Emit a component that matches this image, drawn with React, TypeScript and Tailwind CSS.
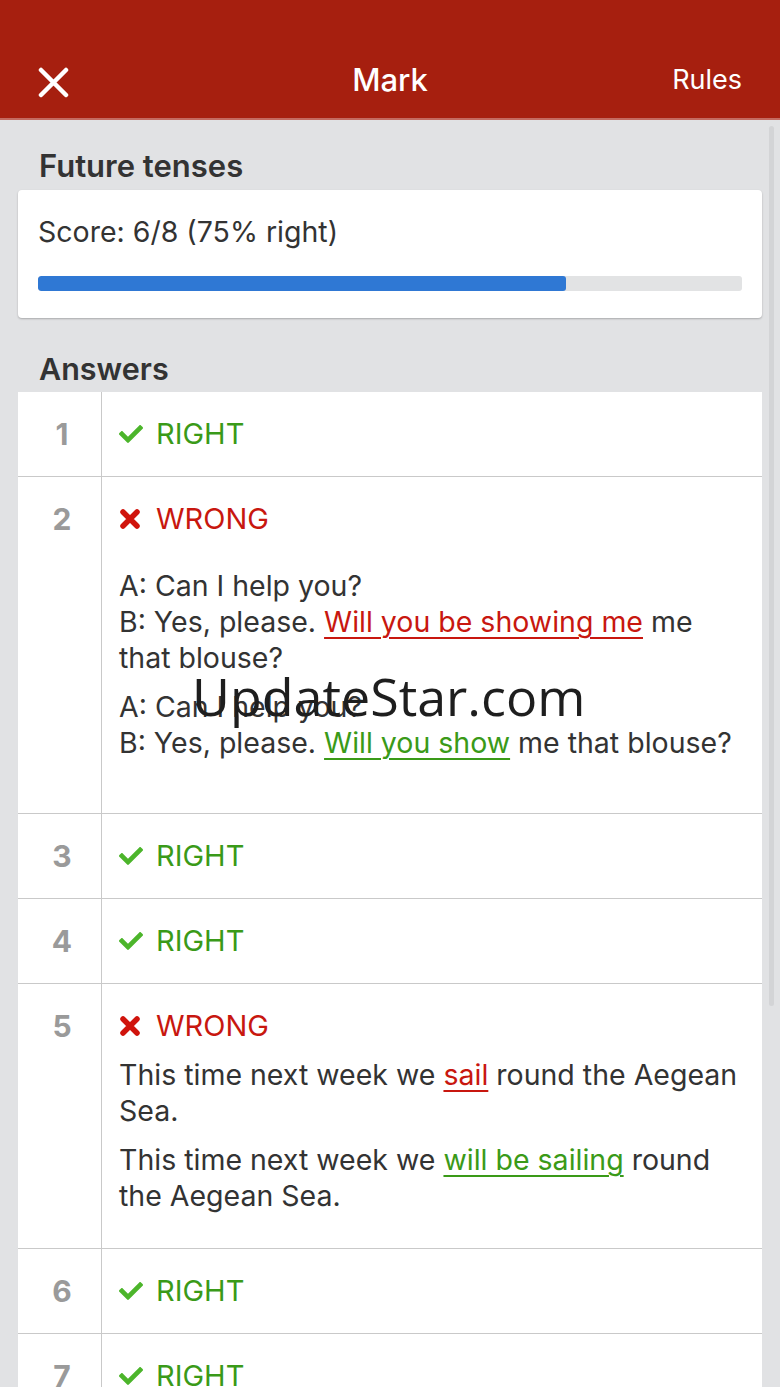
import React from "react";
import { FaCheck } from "react-icons/fa";

const font = { fontFamily: "Inter, 'Liberation Sans', sans-serif" };

function XMark() {
  return (
    <svg width="22" height="22" viewBox="0 0 22 22" className="mr-[15px]">
      <path d="M4 4 L18 18 M18 4 L4 18" stroke="#d0140c" strokeWidth="5.5" strokeLinecap="round" />
    </svg>
  );
}

function Right() {
  return (
    <div className="flex items-center h-[36px]">
      <FaCheck className="text-[#4cb52b] w-[24px] h-[24px] mr-[13px]" />
      <span className="text-[29px] text-[#3a9a18] leading-[36px]">RIGHT</span>
    </div>
  );
}

function Wrong() {
  return (
    <div className="flex items-center h-[36px]">
      <XMark />
      <span className="text-[29px] text-[#c8170f] leading-[36px]">WRONG</span>
    </div>
  );
}

function Row({ n, children, last }: { n: number; children: React.ReactNode; last?: boolean }) {
  return (
    <div className={"flex " + (last ? "" : "border-b border-[#c9c9c9]")}>
      <div className="w-[84px] shrink-0 border-r border-[#c9c9c9] flex justify-center pl-[5px] pt-[24px]">
        <span className="text-[30px] font-bold text-[#9a9a9a] leading-[36px]">{n}</span>
      </div>
      <div className="flex-1 pl-[17px] pr-[8px] pt-[24px] pb-[24px]">{children}</div>
    </div>
  );
}

const Bad = ({ children }: { children: React.ReactNode }) => (
  <span className="text-[#c8170f] underline decoration-[2px] underline-offset-[5px]">{children}</span>
);
const Good = ({ children }: { children: React.ReactNode }) => (
  <span className="text-[#3a9a18] underline decoration-[2px] underline-offset-[5px]">{children}</span>
);

export default function App() {
  return (
    <div className="w-[780px] h-[1387px] overflow-hidden bg-[#e1e2e4] relative" style={font}>
      <div className="h-[120px] bg-[#a61f0f] border-b-[2px] border-[#c46a60] flex items-end pb-[20px] px-[38px]">
        <div className="w-[110px] flex">
          <svg width="31" height="31" viewBox="0 0 31 31" className="mt-[2px]">
            <path d="M3 3 L28 28 M28 3 L3 28" stroke="white" strokeWidth="4.5" strokeLinecap="round" />
          </svg>
        </div>
        <div className="flex-1 text-center text-white text-[31px] font-medium leading-[36px]">Mark</div>
        <div className="w-[110px] text-right text-white text-[27px] leading-[36px]">Rules</div>
      </div>

      <div className="absolute left-[769px] top-[126px] w-[5px] h-[880px] rounded-full bg-[#d3d4d6]" />

      <div className="px-[18px]">
        <div className="pl-[21px] pt-[28px] pb-[6px] text-[31px] font-semibold text-[#333] leading-[36px]">Future tenses</div>
        <div className="bg-white rounded-[4px] shadow-[0_1px_2px_rgba(0,0,0,0.25)] px-[20px] pt-[24px] pb-[27px]">
          <div className="text-[28.5px] text-[#333] leading-[36px]">Score: 6/8 (75% right)</div>
          <div className="mt-[26px] h-[15px] bg-[#e2e3e4] rounded-[3px] overflow-hidden">
            <div className="h-full bg-[#2f78d4] rounded-[3px]" style={{ width: "75%" }} />
          </div>
        </div>

        <div className="pl-[21px] pt-[33px] pb-[5px] text-[30.5px] font-semibold text-[#333] leading-[36px]">Answers</div>
        <div className="bg-white text-[#333] text-[28.5px] leading-[36px]">
          <Row n={1}><Right /></Row>
          <Row n={2}>
            <Wrong />
            <div className="mt-[31px]">
              A: Can I help you?<br />
              B: Yes, please. <Bad>Will you be showing me</Bad> me<br />that blouse?
            </div>
            <div className="mt-[13px] pb-[28px]">
              A: Can I help you?<br />
              B: Yes, please. <Good>Will you show</Good> me that blouse?
            </div>
          </Row>
          <Row n={3}><Right /></Row>
          <Row n={4}><Right /></Row>
          <Row n={5}>
            <Wrong />
            <div className="mt-[13px]">
              This time next week we <Bad>sail</Bad> round the Aegean<br />Sea.
            </div>
            <div className="mt-[13px] pb-[10px]">
              This time next week we <Good>will be sailing</Good> round<br />the Aegean Sea.
            </div>
          </Row>
          <Row n={6}><Right /></Row>
          <Row n={7} last><Right /></Row>
        </div>
      </div>

      <div
        className="absolute left-[192px] top-[664px] text-[52px] leading-[64px] text-[#1e1e1e]"
        style={{ fontFamily: "'Open Sans', sans-serif" }}
      >
        UpdateStar.com
      </div>
    </div>
  );
}
